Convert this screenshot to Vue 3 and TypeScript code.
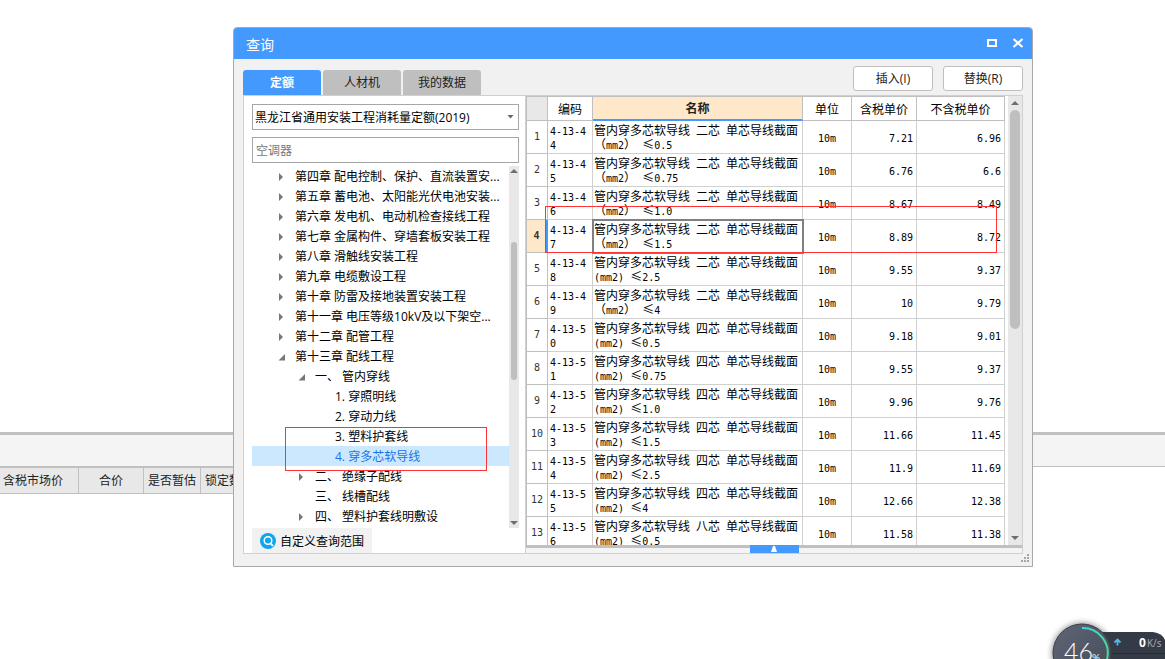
<script setup lang="ts">
import { ref } from 'vue'

interface TreeNode {
  label: string
  level: number
  state: 'closed' | 'open' | 'leaf'
  selected?: boolean
}

interface QuotaRow {
  no: number
  code: string
  tail: string
  cores: string
  wide: boolean
  size: string
  taxed: string
  untaxed: string
}

const quotaBook = ref('黑龙江省通用安装工程消耗量定额(2019)')
const keyword = ref('')

const tabs = ['定额', '人材机', '我的数据']
const activeTab = ref('定额')

const nodes: TreeNode[] = [
  { label: '第四章 配电控制、保护、直流装置安...', level: 1, state: 'closed' },
  { label: '第五章 蓄电池、太阳能光伏电池安装...', level: 1, state: 'closed' },
  { label: '第六章 发电机、电动机检查接线工程', level: 1, state: 'closed' },
  { label: '第七章 金属构件、穿墙套板安装工程', level: 1, state: 'closed' },
  { label: '第八章 滑触线安装工程', level: 1, state: 'closed' },
  { label: '第九章 电缆敷设工程', level: 1, state: 'closed' },
  { label: '第十章 防雷及接地装置安装工程', level: 1, state: 'closed' },
  { label: '第十一章 电压等级10kV及以下架空...', level: 1, state: 'closed' },
  { label: '第十二章 配管工程', level: 1, state: 'closed' },
  { label: '第十三章 配线工程', level: 1, state: 'open' },
  { label: '一、 管内穿线', level: 2, state: 'open' },
  { label: '1. 穿照明线', level: 3, state: 'leaf' },
  { label: '2. 穿动力线', level: 3, state: 'leaf' },
  { label: '3. 塑料护套线', level: 3, state: 'leaf' },
  { label: '4. 穿多芯软导线', level: 3, state: 'leaf', selected: true },
  { label: '二、 绝缘子配线', level: 2, state: 'closed' },
  { label: '三、 线槽配线', level: 2, state: 'leaf' },
  { label: '四、 塑料护套线明敷设', level: 2, state: 'closed' },
]

const source: [string, boolean, string, string, string][] = [
  ['二芯', true, '0.5', '7.21', '6.96'],
  ['二芯', true, '0.75', '6.76', '6.6'],
  ['二芯', true, '1.0', '8.67', '8.49'],
  ['二芯', true, '1.5', '8.89', '8.72'],
  ['二芯', false, '2.5', '9.55', '9.37'],
  ['二芯', true, '4', '10', '9.79'],
  ['四芯', false, '0.5', '9.18', '9.01'],
  ['四芯', false, '0.75', '9.55', '9.37'],
  ['四芯', false, '1.0', '9.96', '9.76'],
  ['四芯', false, '1.5', '11.66', '11.45'],
  ['四芯', false, '2.5', '11.9', '11.69'],
  ['四芯', false, '4', '12.66', '12.38'],
  ['八芯', false, '0.5', '11.58', '11.38'],
]

const rows: QuotaRow[] = source.map(([cores, wide, size, taxed, untaxed], i) => {
  const code = `4-13-${44 + i}`
  return { no: i + 1, code: code.slice(0, 6), tail: code.slice(6), cores, wide, size, taxed, untaxed }
})

const current = ref(4)
</script>

<template>
  <main class="page">
    <section class="sheet">
      <div class="strip"></div>
      <div class="sheet-head">
        <span class="sh first">含税市场价</span>
        <span class="sh total">合价</span>
        <span class="sh guess">是否暂估</span>
        <span class="sh lock">锁定数量</span>
      </div>
    </section>

    <section class="dialog" role="dialog" aria-label="查询">
      <header class="title">
        <h1>查询</h1>
        <button type="button" class="win" aria-label="最大化">
          <svg width="12" height="12" viewBox="0 0 12 12"><rect x="2" y="2" width="8" height="6" fill="none" stroke="#fff" stroke-width="2" /></svg>
        </button>
        <button type="button" class="win" aria-label="关闭">
          <svg width="12" height="12" viewBox="0 0 12 12"><path d="M1.500 1 L10.500 9 M10.500 1 L1.500 9" fill="none" stroke="#fff" stroke-width="2.200" /></svg>
        </button>
      </header>

      <div class="body">
        <div class="toolbar">
          <nav class="tabs">
            <button
              v-for="t in tabs"
              :key="t"
              type="button"
              class="tab"
              :class="{ active: t === activeTab }"
              @click="activeTab = t"
            >{{ t }}</button>
          </nav>
          <div class="actions">
            <button type="button" class="action">插入(I)</button>
            <button type="button" class="action">替换(R)</button>
          </div>
        </div>

        <div class="panel">
          <aside class="left">
            <div class="picker">
              <select v-model="quotaBook" aria-label="定额库">
                <option>黑龙江省通用安装工程消耗量定额(2019)</option>
              </select>
              <svg class="caret" width="7" height="4" viewBox="0 0 7 4"><path d="M0.500 0 H6.500 L3.500 3.500 Z" fill="#666" /></svg>
            </div>
            <input v-model="keyword" class="search" type="text" placeholder="空调器" aria-label="搜索" />

            <div class="tree-wrap">
              <ul class="tree">
                <li
                  v-for="n in nodes"
                  :key="n.label"
                  class="node"
                  :class="['l' + n.level, { selected: n.selected }]"
                >
                  <span class="twist">
                    <svg v-if="n.state === 'closed'" width="7" height="8" viewBox="0 0 7 8"><path d="M1 0 L5 4 L1 8 Z" fill="#777" /></svg>
                    <svg v-else-if="n.state === 'open'" width="7" height="8" viewBox="0 0 7 8"><path d="M7 1 V7.500 H0.500 Z" fill="#777" /></svg>
                  </span>
                  <span>{{ n.label }}</span>
                </li>
              </ul>
              <div class="bar thin">
                <svg width="8" height="4" viewBox="0 0 8 4"><path d="M0 4 L4 0 L8 4 Z" fill="#6d6d78" /></svg>
                <i class="thumb"></i>
                <svg width="8" height="4" viewBox="0 0 8 4"><path d="M0 0 L4 4 L8 0 Z" fill="#6d6d78" /></svg>
              </div>
              <div class="mark tree-mark"></div>
            </div>

            <button type="button" class="scope">
              <svg width="16" height="16" viewBox="0 0 16 16">
                <circle cx="8" cy="8" r="8" fill="#10a5ee" />
                <circle cx="8" cy="7.500" r="3.800" fill="none" stroke="#fff" stroke-width="1.500" />
                <path d="M10.500 10.300 L13 12.800" stroke="#fff" stroke-width="1.800" />
              </svg>
              <span>自定义查询范围</span>
            </button>
          </aside>

          <div class="right">
            <div class="grid-area">
              <table class="grid">
                <colgroup>
                  <col class="c-no" /><col class="c-code" /><col class="c-name" /><col class="c-unit" /><col class="c-taxed" /><col class="c-untaxed" />
                </colgroup>
                <thead>
                  <tr>
                    <th class="no"></th>
                    <th>编码</th>
                    <th class="hot">名称</th>
                    <th>单位</th>
                    <th>含税单价</th>
                    <th>不含税单价</th>
                  </tr>
                </thead>
                <tbody>
                  <tr v-for="r in rows" :key="r.no" :class="{ current: r.no === current }" @click="current = r.no">
                    <td class="no num">{{ r.no }}</td>
                    <td class="code num">{{ r.code }}<br />{{ r.tail }}</td>
                    <td class="name">
                      <div>管内穿多芯软导线<span class="num">&nbsp;</span>{{ r.cores }}<span class="num">&nbsp;</span>单芯导线截面</div>
                      <div v-if="r.wide">（<span class="num">mm2</span>）<span class="num">&nbsp;</span>≤<span class="num">{{ r.size }}</span></div>
                      <div v-else><span class="num">(mm2)&nbsp;</span>≤<span class="num">{{ r.size }}</span></div>
                    </td>
                    <td class="unit num">10m</td>
                    <td class="price num">{{ r.taxed }}</td>
                    <td class="price num">{{ r.untaxed }}</td>
                  </tr>
                </tbody>
              </table>
              <div class="bar wide">
                <svg width="8" height="4" viewBox="0 0 8 4"><path d="M0 4 L4 0 L8 4 Z" fill="#6d6d78" /></svg>
                <i class="thumb"></i>
                <svg width="8" height="4" viewBox="0 0 8 4"><path d="M0 0 L4 4 L8 0 Z" fill="#6d6d78" /></svg>
              </div>
              <div class="mark grid-mark"></div>
            </div>
            <div class="splitter">
              <button type="button" class="expand" aria-label="展开">
                <svg width="6" height="6" viewBox="0 0 6 6"><path d="M2 0 H4 L6 6 H0 Z" fill="#fff" /></svg>
              </button>
            </div>
          </div>
        </div>
      </div>

      <svg class="grip" width="8" height="8" viewBox="0 0 8 8" fill="#a6a6a6">
        <path d="M6 0h2v2h-2z M3 3h2v2h-2z M6 3h2v2h-2z M0 6h2v2h-2z M3 6h2v2h-2z M6 6h2v2h-2z" />
      </svg>
    </section>

    <svg class="meter" width="125" height="47" viewBox="0 0 125 47">
      <defs>
        <linearGradient id="arc" x1="0" y1="0" x2="1" y2="1">
          <stop offset="0" stop-color="#3fd6e0" />
          <stop offset="1" stop-color="#4fd98a" />
        </linearGradient>
        <linearGradient id="disc" x1="0" y1="0" x2="1" y2="1">
          <stop offset="0" stop-color="#5f6675" />
          <stop offset="1" stop-color="#434957" />
        </linearGradient>
        <filter id="soft" x="-30%" y="-30%" width="160%" height="160%"><feGaussianBlur stdDeviation="3" /></filter>
      </defs>
      <circle cx="42" cy="41" r="30" fill="#000" opacity="0.450" filter="url(#soft)" />
      <path d="M42 20 H113 Q122 21 125 28 V47 H42 Z" fill="#343a46" />
      <path d="M70 41.500 H125" stroke="#272c36" />
      <circle cx="42" cy="41" r="29" fill="url(#disc)" stroke="#3a404c" />
      <path d="M42 16 A25 25 0 0 1 67 47" fill="none" stroke="url(#arc)" stroke-width="2" />
      <text x="24" y="49" class="big">46</text>
      <text x="52" y="49" class="pct">%</text>
      <path d="M77.500 33.500 V28 M74.500 30.500 L77.500 27.500 L80.500 30.500" fill="none" stroke="#4db8f0" stroke-width="1.800" />
      <text x="99" y="35" class="zero">0</text>
      <text x="107" y="35" class="rate">K/s</text>
    </svg>
  </main>
</template>

<style>
html,
body {
  overflow: hidden;
  background: #fff;
}
</style>

<style scoped>
.page {
  position: relative;
  box-sizing: border-box;
  min-height: 100vh;
  padding-top: 432px;
  font-family: "Open Sans", "Noto Sans CJK SC", sans-serif;
  font-size: 12px;
  color: #000;
}
button,
select,
input {
  box-sizing: border-box;
  margin: 0;
  font: inherit;
  color: inherit;
}

/* worksheet behind the dialog */
.strip {
  height: 31px;
  border-top: 3px solid #c0c0c0;
  border-bottom: 1px solid #c0c0c0;
  background: #f4f4f4;
}
.sheet-head {
  display: flex;
  width: 40%;
  border-top: 1px solid #c0c0c0;
  border-bottom: 1px solid #c0c0c0;
  background: #e8e8e8;
  line-height: 25px;
  color: #222;
}
.sh {
  box-sizing: border-box;
  border-right: 1px solid #c0c0c0;
  text-align: center;
  white-space: nowrap;
}
.first {
  width: 79px;
  padding-right: 12px;
}
.total {
  width: 65px;
}
.guess {
  width: 57px;
}
.lock {
  width: 57px;
}

/* dialog frame */
.dialog {
  position: absolute;
  top: 27px;
  left: 233px;
  right: 132px;
  border: 1px solid #a8a8a8;
  border-radius: 4px 4px 0 0;
  background: #f1f1f1;
}
.title {
  display: flex;
  align-items: center;
  height: 31px;
  padding: 0 8px 0 12px;
  border-radius: 3px 3px 0 0;
  background: #4499ff;
  color: #fff;
}
.title h1 {
  flex: 1;
  margin: 0;
  padding-top: 2px;
  font-size: 14px;
  font-weight: 400;
  line-height: 20px;
}
.win {
  display: flex;
  margin-left: 14px;
  padding: 0;
  border: 0;
  background: none;
}
.body {
  padding: 7px 9px 12px;
}
.toolbar {
  display: flex;
  justify-content: space-between;
  align-items: flex-end;
  height: 29px;
}
.tabs {
  display: flex;
  gap: 2px;
}
.tab {
  width: 78px;
  height: 25px;
  padding: 0 0 2px;
  border: 0;
  border-radius: 3px 3px 0 0;
  background: #bfbfbf;
  color: #222;
}
.tab.active {
  background: #4499ff;
  color: #fff;
  font-weight: 700;
}
.actions {
  display: flex;
  align-self: flex-start;
  gap: 10px;
}
.action {
  width: 80px;
  height: 25px;
  padding: 0 0 2px;
  border: 1px solid #bfbfbf;
  border-radius: 3px;
  background: #fff;
  color: #222;
}
.panel {
  display: flex;
  border: 1px solid #d0d0d0;
  background: #fff;
}

/* navigation pane */
.left {
  display: flex;
  flex-direction: column;
  align-items: stretch;
  box-sizing: border-box;
  width: 282px;
  padding: 8px 6px 0 8px;
  border-right: 1px solid #d0d0d0;
}
.picker {
  position: relative;
  display: flex;
}
.picker select {
  width: 100%;
  height: 26px;
  padding: 0 16px 0 2px;
  border: 1px solid #a6a6a6;
  border-radius: 0;
  appearance: none;
  background: #fff;
}
.caret {
  position: absolute;
  right: 5px;
  top: 11px;
}
.search {
  height: 26px;
  margin: 7px 0 3px;
  padding: 0 3px;
  border: 1px solid #a6a6a6;
  background: #fff;
}
.search::placeholder {
  color: #777;
  opacity: 1;
}
.tree-wrap {
  position: relative;
  display: flex;
  height: 362px;
}
.tree {
  flex: 1;
  margin: 0;
  padding: 0;
  list-style: none;
}
.node {
  display: flex;
  align-items: center;
  box-sizing: border-box;
  height: 20px;
  padding-top: 2px;
  line-height: 18px;
  white-space: nowrap;
}
.l1 {
  padding-left: 26px;
}
.l2 {
  padding-left: 46px;
}
.l3 {
  padding-left: 66px;
}
.selected {
  background: #cce8ff;
  color: #1a73e8;
}
.twist {
  display: flex;
  width: 17px;
}
.bar {
  display: flex;
  flex-direction: column;
  align-items: center;
  box-sizing: border-box;
  background: #e8e8e8;
}
.bar svg:last-child {
  margin-top: auto;
}
.thumb {
  background: #bfbfbf;
  border-radius: 5px;
}
.thin {
  width: 10px;
  padding: 3px 0;
}
.thin .thumb {
  width: 6px;
  height: 138px;
  margin-top: 69px;
}
.wide {
  width: 14px;
  padding: 5px 0;
}
.wide .thumb {
  width: 10px;
  height: 219px;
  margin-top: 5px;
}
.mark {
  position: absolute;
  z-index: 1;
  box-sizing: border-box;
  border: 1px solid #f33;
  pointer-events: none;
}
.tree-mark {
  left: 33px;
  top: 261px;
  width: 202px;
  height: 44px;
}
.scope {
  display: flex;
  align-items: center;
  align-self: flex-start;
  gap: 4px;
  width: 120px;
  height: 25px;
  padding: 0 8px;
  border: 0;
  background: #f1f1f1;
  white-space: nowrap;
}

/* quota table */
.right {
  flex: 1;
  min-width: 0;
  background: #f4f4f4;
}
.grid-area {
  position: relative;
  display: flex;
  gap: 3px;
  height: 449px;
  overflow: hidden;
  background: #fff;
}
.grid {
  flex: 1;
  table-layout: fixed;
  border-collapse: separate;
  border-spacing: 0;
  border-left: 1px solid #c0c0c0;
  border-top: 1px solid #c0c0c0;
  font-family: "Noto Sans CJK SC", sans-serif;
  line-height: 14px;
}
.c-no {
  width: 21px;
}
.c-code {
  width: 45px;
}
.c-unit {
  width: 49px;
}
.c-taxed {
  width: 65px;
}
.c-untaxed {
  width: 88px;
}
th,
td {
  box-sizing: border-box;
  padding: 0;
  border-right: 1px solid #d0d0d0;
  border-bottom: 1px solid #d0d0d0;
}
th {
  height: 24px;
  border-color: #c0c0c0;
  font-weight: 400;
}
th.hot {
  border-bottom: 2px solid #4499ff;
  background: #ffe7c9;
  font-weight: 700;
  color: #222;
}
th.no {
  background: #e8e8e8;
}
td {
  height: 33px;
  padding-top: 3px;
}
.num {
  font-family: "DejaVu Sans Mono", monospace;
  font-size: 10px;
}
td.no {
  padding-top: 0;
  border-color: #c0c0c0;
  text-align: center;
  color: #333;
}
.code {
  padding-left: 2px;
}
.name {
  padding-top: 0;
  padding-left: 1px;
  white-space: nowrap;
}
.name div {
  height: 14px;
}
.name .num {
  line-height: 10px;
}
.unit {
  text-align: center;
}
.price {
  padding-right: 3px;
  text-align: right;
}
.current .no {
  border-right: 2px solid #4499ff;
  background: #ffe7c9;
  font-weight: 700;
}
.current .name {
  outline: 2px solid #808080;
  outline-offset: -1px;
}
.grid-mark {
  left: 19px;
  top: 110px;
  right: 25px;
  height: 47px;
}
.splitter {
  display: flex;
  justify-content: center;
  box-sizing: border-box;
  height: 8px;
  border-top: 3px solid #c0c0c0;
}
.expand {
  display: flex;
  align-items: center;
  justify-content: center;
  width: 49px;
  height: 8px;
  margin-top: -3px;
  padding: 0;
  border: 0;
  background: #4499ff;
}
.grip {
  position: absolute;
  right: 3px;
  bottom: 4px;
}

/* network meter */
.meter {
  position: absolute;
  right: 0;
  bottom: 0;
}
.big {
  font: 300 25px Lato, sans-serif;
  fill: #fff;
}
.pct {
  font: 400 10px Lato, sans-serif;
  fill: #fff;
}
.zero {
  font: 700 12px "Open Sans", sans-serif;
  fill: #fff;
}
.rate {
  font: 400 10px "Open Sans", sans-serif;
  fill: #a9afba;
}
</style>
